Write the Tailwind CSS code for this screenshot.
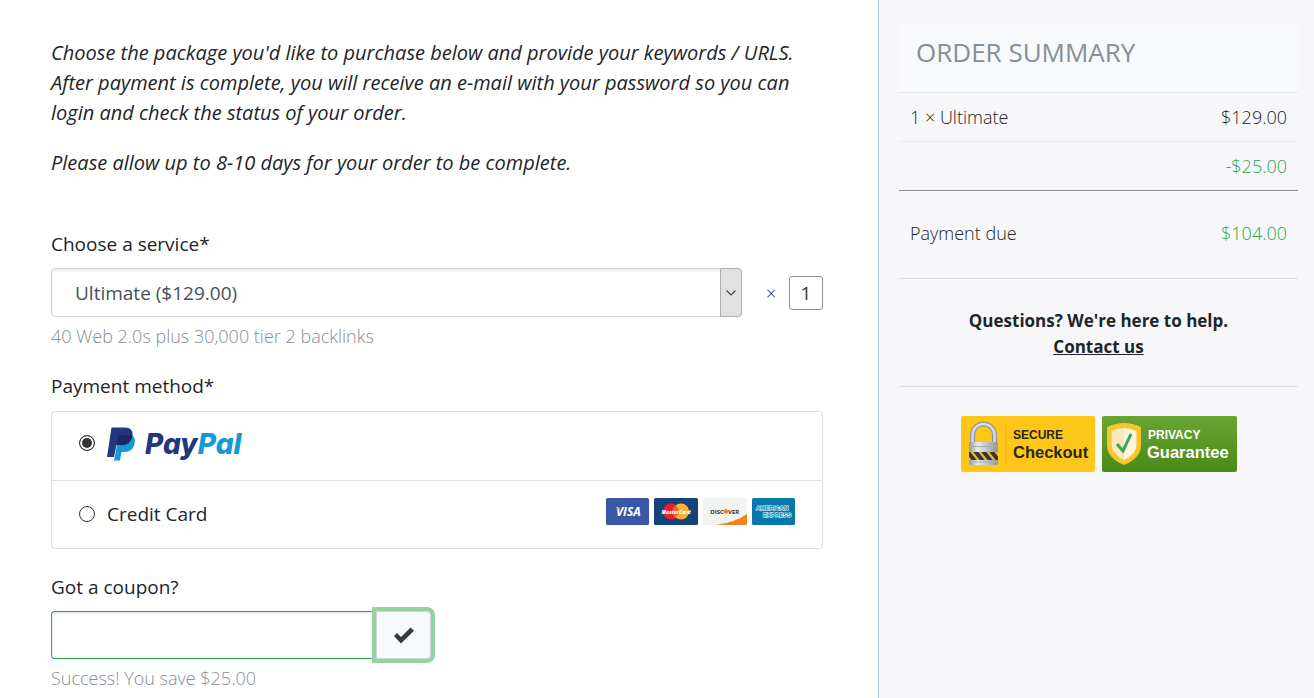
<!DOCTYPE html>
<html lang="en">
<head>
  <meta charset="UTF-8" />
  <meta name="viewport" content="width=device-width, initial-scale=1.0"/>
  <title>Order</title>
  <script src="https://cdn.jsdelivr.net/npm/@tailwindcss/browser@4"></script>
</head>
<body class="bg-white font-['Open_Sans',sans-serif] text-[#212529]">
  <div class="flex min-h-screen">
    <main class="flex-1 pl-[51px] pr-[55px] pt-[38px] text-[19px] leading-[30px]">
      <p class="text-[20px] italic">Choose the package you'd like to purchase below and provide your keywords / URLS. After payment is complete, you will receive an e-mail with your password so you can login and check the status of your order.</p>
      <p class="mt-5 text-[20px] italic">Please allow up to 8-10 days for your order to be complete.</p>

      <form class="mt-[51px]" onsubmit="event.preventDefault();">
        <label for="service" class="block">Choose a service*</label>
        <div class="mt-[9px] flex items-center">
          <div class="relative flex-1">
            <select id="service" class="block h-[49px] w-full appearance-none rounded border border-[#ced4da] bg-white pl-[23px] text-[#495057] shadow-[inset_0_2px_2px_rgba(0,0,0,0.08)]">
              <option>Ultimate ($129.00)</option>
            </select>
            <span class="pointer-events-none absolute inset-y-0 right-0 flex w-[22px] items-center justify-center rounded-r border border-[#adadad] bg-[#e1e1e1]">
              <svg class="h-[10px] w-[10px]" viewBox="0 0 10 10" fill="none" stroke="#444" stroke-width="1.2"><path d="M0.5 2.5 5 7 9.5 2.5"/></svg>
            </span>
          </div>
          <label for="qty" class="ml-6 w-[10px] text-center text-[18px] font-light">×</label>
          <input id="qty" type="text" value="1" class="ml-[13px] h-[34px] w-[34px] rounded-[3px] border border-[#868e96] text-center text-[#343a40]" />
        </div>
        <p class="mt-1 text-[18px] font-light text-[#868e96]">40 Web 2.0s plus 30,000 tier 2 backlinks</p>

        <fieldset class="mt-5">
          <legend>Payment method*</legend>
          <div class="mt-[10px] rounded border border-[#dfdfdf]">
            <label class="flex h-[69px] items-center border-b border-[#dfdfdf] px-[27px] pb-[6px]">
              <input type="radio" name="method" checked class="h-4 w-4 appearance-none rounded-full border border-[#333] bg-[#333] shadow-[inset_0_0_0_2px_white]" />
              <svg class="ml-3 h-[48px] w-[150px]" viewBox="0 -7 150 48" role="img" aria-label="PayPal">
                <path fill="#139ad6" d="M12 9h13q4 3 2.500 9-2 8-10 8h-3l-1.500 8.500H7z"/>
                <path fill="#21387f" d="M4.500 1.500H18q8 0 7.500 7.500-1 10-11 10H9.500L7 31H0z"/>
                <path fill="#1f2660" d="M11.500 9h13.800q-1 10-11 10H9.700z"/>
                <text x="38" y="28" font-size="28" font-weight="800" font-style="italic" font-family="Inter, sans-serif" fill="#21387f">Pay<tspan fill="#139ad6">Pal</tspan></text>
              </svg>
            </label>
            <label class="flex h-[67px] items-center px-[27px] pb-[2px]">
              <input type="radio" name="method" class="h-4 w-4 appearance-none rounded-full border border-[#333] bg-white" />
              <span class="ml-3 flex-1">Credit Card</span>
              <span class="flex gap-[5px] pb-1">
                <svg class="h-[27px] w-[43px]" viewBox="0 0 43 27" role="img" aria-label="Visa">
                  <rect width="43" height="27" rx="1.500" fill="#3957a6"/>
                  <text x="10" y="18" font-size="12" font-weight="700" font-style="italic" fill="#fff">VISA</text>
                  <path fill="#f5a947" d="M9 9h4l1 4q-1.500-2.500-5-4z"/>
                </svg>
                <svg class="h-[27px] w-[44px]" viewBox="0 0 44 27" role="img" aria-label="MasterCard">
                  <rect width="44" height="27" rx="1.500" fill="#15427a"/>
                  <circle cx="17" cy="13.500" r="8" fill="#ec1c2e"/>
                  <circle cx="27" cy="13.500" r="8" fill="#fbb231"/>
                  <path fill="#f26a2a" d="M22 7.300a8 8 0 0 1 0 12.400a8 8 0 0 1 0-12.400"/>
                  <text x="22" y="15.500" text-anchor="middle" font-size="5" font-weight="800" font-style="italic" fill="#fff">MasterCard</text>
                </svg>
                <svg class="h-[27px] w-[44px]" viewBox="0 0 44 27" role="img" aria-label="Discover">
                  <rect width="44" height="27" rx="1.500" fill="#f1f2f2"/>
                  <path fill="#f58220" d="M13 27Q33 24 44 16v9.500q0 1.500-1.500 1.500z"/>
                  <circle cx="22.800" cy="13.500" r="2.300" fill="#f58220"/>
                  <text x="20.800" y="15.700" text-anchor="end" font-size="6" font-weight="700" fill="#333">DISC</text>
                  <text x="25" y="15.700" font-size="6" font-weight="700" fill="#333">VER</text>
                </svg>
                <svg class="h-[27px] w-[43px]" viewBox="0 0 43 27" role="img" aria-label="American Express">
                  <rect width="43" height="27" rx="1.500" fill="#0678ac"/>
                  <g font-family="Liberation Sans, sans-serif" font-size="6" font-weight="700" fill="#0678ac" stroke="#fff" stroke-width="1" paint-order="stroke">
                    <text x="4" y="12">AMERICAN</text>
                    <text x="11" y="19">EXPRESS</text>
                  </g>
                </svg>
              </span>
            </label>
          </div>
        </fieldset>

        <label for="coupon" class="mt-[23px] block">Got a coupon?</label>
        <div class="mt-[9px] flex w-[380px]">
          <input id="coupon" type="text" class="h-12 min-w-0 flex-1 rounded-l border border-r-0 border-[#28a745] px-4 shadow-[inset_0_2px_2px_rgba(0,0,0,0.08)]" />
          <button type="button" aria-label="Apply coupon" class="flex h-12 w-[55px] items-center justify-center rounded-r border border-[#ced4da] bg-[#f8f9fa] shadow-[0_0_0_4px_#94d3a2]">
            <svg class="h-5 w-5" viewBox="0 0 20 20" fill="#343a40"><path d="M0 11 3 8l4 4 9.500-9.500 3.500 3.200L7 18.500z"/></svg>
          </button>
        </div>
        <p class="mt-1 text-[18px] font-light text-[#868e96]">Success! You save $25.00</p>
      </form>
    </main>

    <aside class="w-[436px] border-l border-[#b8c9d6] bg-[#f7f7f9] pl-5 pr-4 pt-6 text-[18px] font-light">
      <h2 class="h-[69px] border-b border-[#e4e9ec] bg-[#f8f9fb] pl-[17px] text-[26px] font-normal leading-[57px] text-[#868e96]">ORDER SUMMARY</h2>
      <table class="w-full">
        <tbody>
          <tr class="h-[48px] border-b border-[#e9ecef]">
            <td class="pl-[11px] pt-[2px]">1 × Ultimate</td>
            <td class="pr-[11px] pt-[2px] text-right">$129.00</td>
          </tr>
          <tr class="h-[49px] border-b border-[#868e96] text-[#28a745]">
            <td></td>
            <td class="pr-[11px] pt-[2px] text-right">-$25.00</td>
          </tr>
          <tr class="h-[88px] border-b border-[#dddddf]">
            <td class="pb-[2px] pl-[11px]">Payment due</td>
            <td class="pb-[2px] pr-[11px] text-right text-[#28a745]">$104.00</td>
          </tr>
        </tbody>
      </table>
      <div class="border-b border-[#dddddf] pb-[26px] pt-[29px] text-center text-[17px] font-bold leading-[26px]">
        <p>Questions? We're here to help.</p>
        <a href="#" class="underline">Contact us</a>
      </div>
      <div class="mt-[29px] flex justify-center gap-[7px]">
        <svg class="h-[56px] w-[134px]" viewBox="0 0 134 56" role="img" aria-label="Secure Checkout">
          <defs>
            <linearGradient id="steel" x1="0" x2="1"><stop offset="0" stop-color="#8e979b"/><stop offset=".3" stop-color="#e8eced"/><stop offset="1" stop-color="#8c9599"/></linearGradient>
            <clipPath id="band"><rect x="8" y="36" width="29" height="8"/></clipPath>
          </defs>
          <rect width="134" height="56" rx="2" fill="#ffc61a"/>
          <path d="M45 8v41" stroke="#e6ad0c"/>
          <path d="M11.500 27V19a11 11 0 0 1 22 0v8" fill="none" stroke="#8e989c" stroke-width="5"/>
          <path d="M11.500 27V19a11 11 0 0 1 22 0v8" fill="none" stroke="#d5dbde" stroke-width="2.500"/>
          <rect x="8" y="26" width="29" height="23" rx="1.500" fill="url(#steel)"/>
          <path d="M8 30.500h29M8 46h29" stroke="#a4acb0"/>
          <g clip-path="url(#band)">
            <rect x="8" y="36" width="29" height="8" fill="#f5b62e"/>
            <path d="M6 35l8 10M14 35l8 10M22 35l8 10M30 35l8 10" stroke="#34373a" stroke-width="4"/>
          </g>
          <g font-family="Liberation Sans, sans-serif" fill="#2b2718">
            <text x="52" y="23" font-size="12" font-weight="700">SECURE</text>
            <text x="52" y="42" font-size="16.500" font-weight="700">Checkout</text>
          </g>
        </svg>
        <svg class="h-[56px] w-[135px]" viewBox="0 0 135 56" role="img" aria-label="Privacy Guarantee">
          <defs>
            <linearGradient id="green" x2="0" y2="1"><stop offset="0" stop-color="#69a533"/><stop offset="1" stop-color="#4b8a17"/></linearGradient>
          </defs>
          <rect width="135" height="56" rx="2" fill="url(#green)"/>
          <path fill="#f9c52d" d="M22 7q8 0 17 4v18q0 13-17 20Q5 42 5 29V11q9-4 17-4z"/>
          <path fill="#fff6de" d="M22 12q6 0 12.500 3v14q0 9-12.500 15z"/>
          <path fill="#fbe8bd" d="M22 12q-6 0-12.500 3v14q0 9 12.500 15z"/>
          <path d="M15 28l6 7 8-17" fill="none" stroke="#3fa45b" stroke-width="3"/>
          <g font-family="Liberation Sans, sans-serif" fill="#fff">
            <text x="46" y="23" font-size="12" font-weight="700">PRIVACY</text>
            <text x="45" y="42" font-size="16.500" font-weight="700">Guarantee</text>
          </g>
        </svg>
      </div>
    </aside>
  </div>
</body>
</html>
